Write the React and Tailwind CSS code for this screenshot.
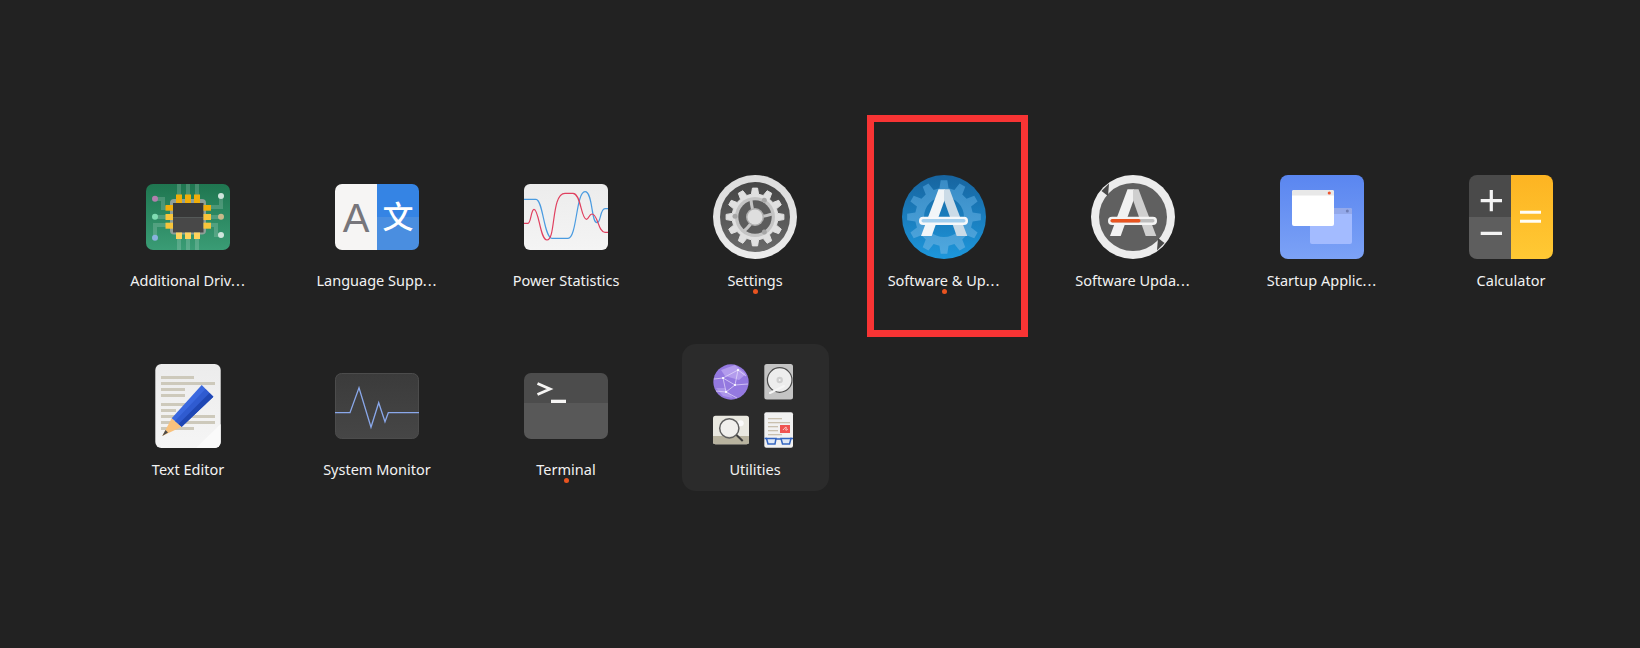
const gearPath = (cx, cy, outer, root, teeth, hole = 0) => {
  const step = (Math.PI * 2) / teeth;
  const pt = (r, a) => `${(cx + r * Math.cos(a)).toFixed(2)} ${(cy + r * Math.sin(a)).toFixed(2)}`;
  let d = "";
  for (let i = 0; i < teeth; i++) {
    const a = i * step - Math.PI / 2;
    d += `${i === 0 ? "M" : "L"}${pt(root, a - step * 0.3)} `;
    d += `L${pt(outer, a - step * 0.17)} L${pt(outer, a + step * 0.17)} L${pt(root, a + step * 0.3)} `;
  }
  d += "Z";
  if (hole) d += ` M${cx - hole} ${cy}a${hole} ${hole} 0 1 0 ${hole * 2} 0a${hole} ${hole} 0 1 0 ${-hole * 2} 0Z`;
  return d;
};

const Grad = ({ id, from, to }) => (
  <linearGradient id={id} x1="0" y1="0" x2="0" y2="1">
    <stop offset="0" stopColor={from} />
    <stop offset="1" stopColor={to} />
  </linearGradient>
);

const Svg = ({ children }) => (
  <svg viewBox="0 0 84 84" className="block h-[84px] w-[84px]">
    {children}
  </svg>
);

const DriversIcon = () => (
  <Svg>
    <defs>
      <Grad id="drv" from="#1f7650" to="#3a9c75" />
    </defs>
    <rect y="9" width="84" height="66" rx="7" fill="url(#drv)" />
    <g stroke="#fff" strokeOpacity=".17" strokeWidth="4" fill="none">
      <path d="M33 9V75M42 9V75M51 9V75" />
      <path d="M9 24H17V33H25M9 42H25M9 60V50H25M75 21V32H60M75 42H60M60 50H70V60H75" />
    </g>
    <rect x="24" y="24" width="36" height="35.5" rx="4" fill="#8f9f98" />
    <rect x="27" y="28" width="30.5" height="14.5" fill="#383838" />
    <rect x="27" y="42.5" width="30.5" height="15" fill="#484848" />
    <g fill="#f0ae0a">
      <rect x="30" y="19.5" width="6" height="8.5" />
      <rect x="39" y="19.5" width="6" height="8.5" />
      <rect x="48" y="19.5" width="6" height="8.5" />
      <rect x="19.5" y="30" width="7.5" height="5.7" />
      <rect x="57.5" y="30" width="7.5" height="5.7" />
    </g>
    <g fill="#f8c53a">
      <rect x="19.5" y="39" width="7.5" height="6" />
      <rect x="57.5" y="39" width="7.5" height="6" />
      <rect x="19.5" y="47.7" width="7.5" height="6" />
      <rect x="57.5" y="47.7" width="7.5" height="6" />
    </g>
    <g fill="#ffd35c">
      <rect x="30" y="57.5" width="6" height="6.5" />
      <rect x="39" y="57.5" width="6" height="6.5" />
      <rect x="48" y="57.5" width="6" height="6.5" />
    </g>
    <circle cx="9" cy="23.7" r="3" fill="#b27fae" />
    <circle cx="9" cy="41.7" r="3" fill="#7fdcb2" />
    <circle cx="9" cy="62.7" r="3" fill="#8ab2de" />
    <circle cx="75" cy="21" r="3" fill="#cfe5dc" />
    <circle cx="75" cy="41.7" r="3" fill="#c9b98a" />
    <circle cx="75" cy="60" r="3" fill="#cfe5dc" />
  </Svg>
);

const LanguageIcon = () => (
  <Svg>
    <defs>
      <clipPath id="lng">
        <rect y="9" width="84" height="66" rx="7" />
      </clipPath>
    </defs>
    <g clipPath="url(#lng)">
      <rect y="9" width="42" height="66" fill="#f6f5f4" />
      <rect x="42" y="9" width="42" height="33" fill="#3584e4" />
      <rect x="42" y="42" width="42" height="33" fill="#4a8ee0" />
    </g>
    <text x="21" y="56.5" textAnchor="middle" fontSize="40" fontFamily="'Liberation Sans', sans-serif" fill="#77767b">
      A
    </text>
    <text x="63" y="53" textAnchor="middle" fontSize="31" fontWeight="500" fontFamily="'Noto Sans CJK SC', sans-serif" fill="#fff">
      文
    </text>
  </Svg>
);

const PowerIcon = () => (
  <Svg>
    <defs>
      <Grad id="pwr" from="#ececec" to="#f4f4f4" />
    </defs>
    <rect y="9" width="84" height="66" rx="6" fill="url(#pwr)" />
    <path
      d="M0 24.3H12C19 24.3 20 63.3 28 63.3H44C53 63.3 52 16.7 61 16.7C69 16.7 67 47.7 73 47.7C77 47.7 76 33.7 81 33.7H84"
      fill="none"
      stroke="#4a9be0"
      strokeWidth="1.2"
    />
    <path
      d="M0 48.3H4C7 48.3 7 34.3 10 34.3C15 34.3 16 65 23 65C32 65 27 18.3 41 18.3H49C57 18.3 57 44.3 62.5 44.3C65 44.3 65 39 68 39C74 39 74 57.3 81 57.3H84"
      fill="none"
      stroke="#e0405f"
      strokeWidth="1.2"
    />
  </Svg>
);

const SettingsIcon = () => (
  <Svg>
    <defs>
      <Grad id="setO" from="#dcdcdc" to="#ececec" />
      <Grad id="setI" from="#454545" to="#6a6a6a" />
    </defs>
    <circle cx="42" cy="42" r="42" fill="url(#setO)" />
    <circle cx="42" cy="42" r="35" fill="url(#setI)" />
    <path d={gearPath(42, 42, 29, 23, 12)} fill="#e0e0e0" stroke="#e0e0e0" strokeWidth="1" strokeLinejoin="round" />
    <circle cx="42" cy="42" r="20" fill="#c4c4c4" />
    <circle cx="42" cy="42" r="16.7" fill="#5c5c5c" />
    <g stroke="#c4c4c4" strokeWidth="3" fill="none">
      <path d="M42 42Q39 35 38 25M42 42Q50 42 59 39M42 42Q38 50 31 56" />
    </g>
    <circle cx="42" cy="42" r="9" fill="#b0b0b0" />
    <circle cx="42" cy="42" r="7.5" fill="#dedede" />
    <circle cx="51.3" cy="25.3" r="2.5" fill="#a6a6a6" />
    <circle cx="22" cy="41.3" r="2.5" fill="#a6a6a6" />
    <circle cx="51.3" cy="57" r="2.5" fill="#a6a6a6" />
  </Svg>
);

const LetterA = ({ left, right }) => (
  <>
    <polygon points="36.5,14.3 43,14.3 43,24 29.7,61 19,61" fill={left} />
    <polygon points="42,14.3 47.5,14.3 65.3,61 54.7,61 42,25" fill={right} />
  </>
);

const SoftwareIcon = () => (
  <Svg>
    <defs>
      <Grad id="sw" from="#17649f" to="#1d97dc" />
      <Grad id="swG" from="#3a8cc6" to="#4fa8df" />
    </defs>
    <circle cx="42" cy="42" r="42" fill="url(#sw)" />
    <path d={gearPath(42, 42, 37, 29, 12, 20)} fillRule="evenodd" fill="url(#swG)" />
    <LetterA left="#f1f5f8" right="#cbdbe7" />
    <rect x="17" y="41.7" width="49" height="8.3" rx="4.1" fill="#f6f8fa" />
    <rect x="19.5" y="44" width="44" height="3.6" rx="1.8" fill="#a3cfee" />
  </Svg>
);

const UpdaterIcon = () => (
  <Svg>
    <circle cx="42" cy="42" r="42" fill="#ececec" />
    <circle cx="42" cy="42" r="34" fill="#606060" />
    <polygon points="18,8.5 17,21 10.5,16" fill="#484848" />
    <polygon points="66,75.5 67,63 73.5,68" fill="#484848" />
    <LetterA left="#f1f1f1" right="#cfcfcf" />
    <rect x="17" y="41.7" width="49" height="8.3" rx="4.1" fill="#f4f4f4" />
    <rect x="19.5" y="44" width="44" height="3.6" rx="1.8" fill="#bdbdbd" />
    <rect x="19.5" y="44" width="30" height="3.6" rx="1.8" fill="#e95420" />
  </Svg>
);

const StartupIcon = () => (
  <Svg>
    <defs>
      <Grad id="st" from="#5a86f0" to="#7ca2f6" />
    </defs>
    <rect width="84" height="84" rx="8" fill="url(#st)" />
    <rect x="30" y="33" width="42" height="36" rx="2" fill="#a3bbff" />
    <path d="M30 39V35A2 2 0 0 1 32 33H70A2 2 0 0 1 72 35V39Z" fill="#94a9ea" />
    <circle cx="67.3" cy="36" r="1.5" fill="#6f7fb8" />
    <rect x="12" y="15" width="42" height="36" rx="2" fill="#fff" />
    <path d="M12 20.5V17A2 2 0 0 1 14 15H52A2 2 0 0 1 54 17V20.5Z" fill="#e8e8e8" />
    <circle cx="49.3" cy="18" r="1.6" fill="#f0562f" />
  </Svg>
);

const CalculatorIcon = () => (
  <Svg>
    <defs>
      <Grad id="calc" from="#fdb422" to="#ffc934" />
      <clipPath id="calcClip">
        <rect width="84" height="84" rx="8" />
      </clipPath>
    </defs>
    <g clipPath="url(#calcClip)">
      <rect width="42" height="42" fill="#4a4a4a" />
      <rect y="42" width="42" height="42" fill="#5e5e5e" />
      <rect x="42" width="42" height="84" fill="url(#calc)" />
    </g>
    <path d="M11.7 25.7H33M22.3 15V36.3M11.7 58.3H33" stroke="#f4f4f4" strokeWidth="3.2" />
    <path d="M51 37.3H72M51 46.3H72" stroke="#fffdf5" strokeWidth="3" />
  </Svg>
);

const EditorIcon = () => (
  <Svg>
    <defs>
      <Grad id="ed" from="#ececec" to="#f5f5f5" />
    </defs>
    <rect x="9.3" width="65.4" height="84" rx="6" fill="url(#ed)" />
    <path d="M74.7 60V78A6 6 0 0 1 68.7 84H50Z" fill="#fafafa" />
    <g fill="#cdc9bb">
      <rect x="15" y="12" width="33" height="3" />
      <rect x="15" y="18" width="54" height="3" />
      <rect x="15" y="24" width="24" height="3" />
      <rect x="15" y="30" width="24" height="3" />
      <rect x="15" y="39" width="30" height="3" />
      <rect x="15" y="45" width="15" height="3" />
      <rect x="15" y="51" width="54" height="3" />
      <rect x="15" y="57" width="54" height="3" />
      <rect x="15" y="63" width="33" height="3" />
    </g>
    <polygon points="16.3,72 25.7,54.3 35.7,62.7" fill="#f9c27d" />
    <polygon points="16.3,72 19.5,66 22,68.5" fill="#4a4a4a" />
    <polygon points="25.7,54.3 55.7,21 67.3,32.7 35.7,62.7" fill="#3a68df" />
    <polygon points="29,57 59.5,25 67.3,32.7 35.7,62.7" fill="#2f5bd0" />
    <polygon points="32.5,60 63.5,29 67.3,32.7 35.7,62.7" fill="#1f47b4" />
  </Svg>
);

const MonitorIcon = () => (
  <Svg>
    <defs>
      <Grad id="mon" from="#3b3b3b" to="#464646" />
    </defs>
    <rect x=".5" y="9.5" width="83" height="65" rx="6" fill="url(#mon)" stroke="#4c4c4c" />
    <polyline
      points="0,48.7 15,48.7 24,23.7 36,63.3 43.7,38.7 50,57.7 53.3,48.7 84,48.7"
      fill="none"
      stroke="#8aa8ea"
      strokeWidth="1.3"
    />
  </Svg>
);

const TerminalIcon = () => (
  <Svg>
    <defs>
      <clipPath id="term">
        <rect y="9" width="84" height="66" rx="7" />
      </clipPath>
    </defs>
    <g clipPath="url(#term)">
      <rect y="9" width="84" height="30" fill="#4c4c4c" />
      <rect y="39" width="84" height="36" fill="#585858" />
    </g>
    <polyline points="13.5,19.5 26,25 13.5,30.5" fill="none" stroke="#f6f5f4" strokeWidth="2.8" />
    <rect x="27" y="35.7" width="15" height="3.3" fill="#f6f5f4" />
  </Svg>
);

const MiniSvg = ({ children }) => (
  <svg viewBox="0 0 36 36" className="block h-9 w-9">
    {children}
  </svg>
);

const GlobeMini = () => (
  <MiniSvg>
    <circle cx="18" cy="18" r="17.7" fill="#9479e0" />
    <polygon points="8,6 22,1 33,10 26,16 12,12" fill="#b39ced" />
    <polygon points="3,24 12,24 20,34 10,32" fill="#ab95ea" />
    <g stroke="#e6dcfb" strokeWidth=".7" fill="none">
      <path d="M1 15L10 14L25 6L33 12M10 14L22 21L35 20M22 21L13 28L3 27M22 21L25 6M13 28L24 34M10 14L13 28" />
    </g>
    <g fill="#fff">
      <circle cx="10" cy="14" r="1.1" />
      <circle cx="25" cy="6" r="1.1" />
      <circle cx="22" cy="21" r="1.1" />
      <circle cx="13" cy="28" r="1.1" />
    </g>
  </MiniSvg>
);

const DiskMini = () => (
  <MiniSvg>
    <rect x="3.3" width="28.7" height="35.4" rx="2.5" fill="#c4c4c4" />
    <circle cx="18.7" cy="16" r="12.3" fill="#ededed" stroke="#4d4d4d" strokeWidth="1.2" />
    <circle cx="18.7" cy="16" r="3.2" fill="#cfcfcf" />
    <circle cx="18.7" cy="16" r="1" fill="#f4f4f4" />
    <path d="M9 29L23 22" stroke="#f6f6f6" strokeWidth="2" strokeLinecap="round" />
  </MiniSvg>
);

const SearchMini = () => (
  <MiniSvg>
    <rect y="3.7" width="36" height="28.6" rx="2.5" fill="#e9e8e0" />
    <path d="M0 24H36V29.8A2.5 2.5 0 0 1 33.5 32.3H2.5A2.5 2.5 0 0 1 0 29.8Z" fill="#b8b39f" />
    <circle cx="27.7" cy="11.3" r="3" fill="#fafafa" />
    <circle cx="16.3" cy="16.3" r="9.6" fill="#f4f4f2" fillOpacity=".7" stroke="#5f5f5f" strokeWidth="1.5" />
    <path d="M23.5 23L29.7 29" stroke="#3d3d3d" strokeWidth="2" />
  </MiniSvg>
);

const DocMini = () => (
  <MiniSvg>
    <rect x="3.3" y=".3" width="28.7" height="35.4" rx="2" fill="#f1f1f1" />
    <g fill="#c9c0ae">
      <rect x="7" y="6" width="14" height="1.3" />
      <rect x="7" y="10" width="22" height="1.3" />
      <rect x="7" y="14" width="10" height="1.3" />
      <rect x="7" y="18" width="10" height="1.3" />
      <rect x="7" y="22" width="14" height="1.3" />
    </g>
    <rect x="19" y="13" width="10" height="8" fill="#ef5350" />
    <path d="M22 18C25 14 26 15 25 17C24 19 26 18 27 17" stroke="#fff" strokeWidth=".7" fill="none" />
    <g stroke="#3465c0" strokeWidth="1.5" fill="#dfe8f5">
      <path d="M5.5 26.5H15L14 32H7Z" />
      <path d="M20 26.5H30L28.5 32H21.5Z" />
    </g>
    <path d="M3.5 26.5H6M15 27H20M29 26.5H32" stroke="#3465c0" strokeWidth="1.3" />
  </MiniSvg>
);

const Label = ({ name, cut }) => (
  <div className="mt-3 whitespace-nowrap text-[14.5px] leading-[18px] text-[#f2f2f2]">
    {name}
    {cut && <span className="tracking-[1px]">...</span>}
  </div>
);

const AppTile = ({ name, cut, Icon, running, marked }) => (
  <div className="relative flex h-[147px] flex-col items-center pt-5">
    <Icon />
    <Label name={name} cut={cut} />
    {running && <div className="h-[5px] w-[5px] rounded-full bg-[#e95420]" />}
    {marked && (
      <div className="absolute -left-[3.5px] -right-[10.5px] -top-10 -bottom-[35px] border-[7px] border-[#f83434]" />
    )}
  </div>
);

const UtilitiesFolder = () => (
  <div className="flex h-[147px] flex-col items-center rounded-[14px] bg-[#2b2b2b] pt-5">
    <div className="grid w-[84px] grid-cols-2 gap-3">
      <GlobeMini />
      <DiskMini />
      <SearchMini />
      <DocMini />
    </div>
    <Label name="Utilities" />
  </div>
);

const apps = [
  { name: "Additional Driv", cut: true, Icon: DriversIcon },
  { name: "Language Supp", cut: true, Icon: LanguageIcon },
  { name: "Power Statistics", Icon: PowerIcon },
  { name: "Settings", Icon: SettingsIcon, running: true },
  { name: "Software & Up", cut: true, Icon: SoftwareIcon, running: true, marked: true },
  { name: "Software Upda", cut: true, Icon: UpdaterIcon },
  { name: "Startup Applic", cut: true, Icon: StartupIcon },
  { name: "Calculator", Icon: CalculatorIcon },
  { name: "Text Editor", Icon: EditorIcon },
  { name: "System Monitor", Icon: MonitorIcon },
  { name: "Terminal", Icon: TerminalIcon, running: true },
];

export default function App() {
  return (
    <div className="h-[648px] w-[1640px] overflow-hidden bg-[#222222] pl-[114.5px] pt-[155px] font-['Noto_Sans',sans-serif]">
      <div className="grid grid-cols-[repeat(8,147px)] gap-[42px]">
        {apps.map((app) => (
          <AppTile key={app.name} {...app} />
        ))}
        <UtilitiesFolder />
      </div>
    </div>
  );
}
